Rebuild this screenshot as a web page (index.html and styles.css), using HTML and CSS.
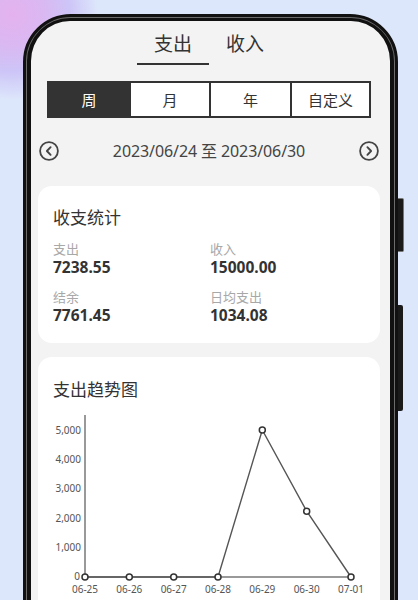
FILE: index.html
```html
<!DOCTYPE html>
<html lang="zh-CN">
<head>
<meta charset="utf-8">
<title>支出统计</title>
<link rel="stylesheet" href="styles.css">
</head>
<body>
<div class="phone">
  <span class="btn btn-1"></span>
  <span class="btn btn-2"></span>
  <div class="screen">
    <div class="tabs">
      <div class="tab active">支出</div>
      <div class="tab">收入</div>
    </div>
    <div class="segment">
      <div class="seg on">周</div>
      <div class="seg">月</div>
      <div class="seg">年</div>
      <div class="seg">自定义</div>
    </div>
    <div class="daterow">
      <svg class="nav" width="20" height="20" viewBox="0 0 20 20"><circle cx="10" cy="10" r="8.9" fill="none" stroke="#444" stroke-width="1.8"/><path d="M11.6 6.2 L7.9 10 L11.6 13.8" fill="none" stroke="#444" stroke-width="1.9" stroke-linecap="round" stroke-linejoin="round"/></svg>
      <div class="daterange">2023/06/24 至 2023/06/30</div>
      <svg class="nav" width="20" height="20" viewBox="0 0 20 20"><circle cx="10" cy="10" r="8.9" fill="none" stroke="#444" stroke-width="1.8"/><path d="M8.4 6.2 L12.1 10 L8.4 13.8" fill="none" stroke="#444" stroke-width="1.9" stroke-linecap="round" stroke-linejoin="round"/></svg>
    </div>
    <div class="card stats">
      <div class="card-title">收支统计</div>
      <div class="grid">
        <div class="cell"><div class="lbl">支出</div><div class="val">7238.55</div></div>
        <div class="cell"><div class="lbl">收入</div><div class="val">15000.00</div></div>
        <div class="cell"><div class="lbl">结余</div><div class="val">7761.45</div></div>
        <div class="cell"><div class="lbl">日均支出</div><div class="val">1034.08</div></div>
      </div>
    </div>
    <div class="card trend">
      <div class="card-title">支出趋势图</div>
      <svg class="chart" width="342" height="200" viewBox="0 0 342 200">
        <g class="ylab" text-anchor="end">
          <text x="43" y="28.5">5,000</text>
          <text x="43" y="57.9">4,000</text>
          <text x="43" y="87.3">3,000</text>
          <text x="43" y="116.7">2,000</text>
          <text x="43" y="146.1">1,000</text>
          <text x="42" y="175">0</text>
        </g>
        <line x1="47" y1="10" x2="47" y2="172" stroke="#777" stroke-width="1.5"/>
        <line x1="47" y1="172" x2="313" y2="172" stroke="#777" stroke-width="1.5"/>
        <polyline points="47,172 91.3,172 135.7,172 180,172 224.3,25 268.7,106.2 313,172" fill="none" stroke="#555" stroke-width="1.4"/>
        <g fill="#fff" stroke="#333" stroke-width="1.5">
          <circle cx="47" cy="172" r="3"/>
          <circle cx="91.3" cy="172" r="3"/>
          <circle cx="135.7" cy="172" r="3"/>
          <circle cx="180" cy="172" r="3"/>
          <circle cx="224.3" cy="25" r="3"/>
          <circle cx="268.7" cy="106.2" r="3"/>
          <circle cx="313" cy="172" r="3"/>
        </g>
        <g class="xlab" text-anchor="middle">
          <text x="47" y="187.5">06-25</text>
          <text x="91.3" y="187.5">06-26</text>
          <text x="135.7" y="187.5">06-27</text>
          <text x="180" y="187.5">06-28</text>
          <text x="224.3" y="187.5">06-29</text>
          <text x="268.7" y="187.5">06-30</text>
          <text x="313" y="187.5">07-01</text>
        </g>
      </svg>
    </div>
  </div>
</div>
</body>
</html>
```
FILE: styles.css
```css
* { box-sizing: border-box; }
html, body {
  margin: 0;
  height: 600px;
  overflow: hidden;
}
body {
  font-family: "Noto Sans", "Noto Sans CJK SC", sans-serif;
  color: #333;
  background:
    radial-gradient(circle at 12px 14px, #e4b2ee 0, #dab8f2 32px, #cdc5f7 58px, rgba(221,231,251,0) 86px),
    #dde7fb;
  padding-top: 14px;
  padding-left: 23px;
}
.phone {
  position: relative;
  width: 375px;
  height: 720px;
  border: 3px solid #111;
  border-radius: 48px;
  background: #6c6c6c;
  padding: 1px;
}
.btn {
  position: absolute;
  background: #1a1a1a;
  border-radius: 0 2px 2px 0;
}
.btn-1 {
  left: 372px;
  top: 181px;
  width: 6px;
  height: 54px;
  border: 1px solid #777;
  border-left: none;
}
.btn-2 {
  left: 372px;
  top: 288px;
  width: 5px;
  height: 106px;
}
.screen {
  height: 100%;
  border-style: solid;
  border-color: #111;
  border-width: 3px 4px;
  border-radius: 43px;
  background: #f3f3f3;
  padding: 9px 10px 0 7px;
}
.tabs {
  display: flex;
  justify-content: center;
}
.tab {
  width: 72px;
  text-align: center;
  font-size: 19px;
  line-height: 28px;
  padding-bottom: 5px;
  border-bottom: 2px solid transparent;
  color: #333;
}
.tab.active { border-bottom-color: #333; }
.segment {
  margin: 16px 9px 0 9px;
  height: 37px;
  border: 2px solid #333;
  display: grid;
  grid-template-columns: 80px 80px 81px 1fr;
  background: #fff;
}
.seg {
  display: flex;
  align-items: center;
  justify-content: center;
  font-size: 15px;
  color: #333;
  border-left: 2px solid #333;
}
.seg:first-child { border-left: none; }
.seg.on { background: #333; color: #fff; }
.daterow {
  margin-top: 21px;
  height: 24px;
  display: flex;
  align-items: center;
  justify-content: space-between;
  padding: 0 0.5px 0 0.5px;
}
.nav { display: block; }
.daterange {
  font-size: 16px;
  line-height: 24px;
  color: #444;
  letter-spacing: -0.1px;
}
.card {
  background: #fff;
  border-radius: 14px;
  padding: 20px 15px 18px 15px;
}
.stats { margin-top: 23px; height: 157px; }
.card-title {
  font-size: 17px;
  line-height: 24px;
  color: #333;
}
.grid {
  margin-top: 12px;
  display: grid;
  grid-template-columns: 157px 1fr;
  row-gap: 13px;
}
.lbl {
  font-size: 13px;
  line-height: 15px;
  color: #a8a8a8;
}
.val {
  margin-top: 1px;
  font-size: 15.5px;
  line-height: 19px;
  font-weight: 700;
  color: #333;
}
.trend {
  margin-top: 14px;
  padding: 21px 0 0 0;
  height: 260px;
}
.trend .card-title { padding-left: 15px; }
.chart {
  display: block;
  margin-top: 3px;
}
.chart text {
  font-family: "Noto Sans", sans-serif;
  font-size: 10px;
  fill: #555;
}
```
